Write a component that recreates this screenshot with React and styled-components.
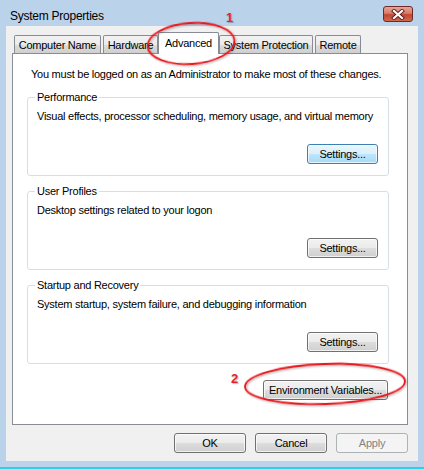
import React from "react";
import styled, { createGlobalStyle, css } from "styled-components";

const GlobalStyle = createGlobalStyle`
  html, body {
    margin: 0;
    padding: 0;
  }
  body {
    background: #bad2ea;
    font-family: "Liberation Sans", Arial, sans-serif;
    font-size: 11px;
    letter-spacing: -0.25px;
    color: #000;
  }
`;

const Window = styled.div`
  position: relative;
  width: 424px;
  height: 469px;
  box-sizing: border-box;
  background: #bad2ea;
  border-bottom: 2px solid #2fd0e6;
  display: flex;
  flex-direction: column;
  overflow: hidden;
`;

const TitleBar = styled.div`
  height: 26px;
  display: flex;
  align-items: flex-start;
  justify-content: space-between;
  padding: 6px 11px 0 10px;
  box-sizing: border-box;
`;

const Title = styled.span`
  font-size: 12px;
  line-height: 16px;
  margin-top: 2px;
  color: #000;
`;

const CloseButton = styled.div`
  width: 30px;
  height: 16px;
  box-sizing: border-box;
  border: 1px solid #6e2a26;
  border-radius: 3px;
  background: linear-gradient(#e6a597 0%, #d87a6a 45%, #c24633 55%, #cf6a4f 100%);
  display: flex;
  align-items: center;
  justify-content: center;
`;

const Client = styled.div`
  height: 435px;
  margin: 0 6px;
  padding: 6px 10px 0 6px;
  box-sizing: border-box;
  background: #f0f0f0;
  display: flex;
  flex-direction: column;
`;

const TabStrip = styled.div`
  height: 21px;
  padding-left: 2px;
  display: flex;
  align-items: flex-end;
  gap: 2px;
`;

const Tab = styled.div`
  width: ${(p) => p.$w}px;
  height: 18px;
  box-sizing: border-box;
  border: 1px solid #898c95;
  border-bottom: none;
  border-radius: 2px 2px 0 0;
  background: linear-gradient(#f2f2f2 0%, #ebebeb 50%, #dddddd 51%, #cfcfcf 100%);
  display: flex;
  align-items: center;
  justify-content: center;
  white-space: nowrap;
  ${(p) =>
    p.$active &&
    css`
      height: 22px;
      margin: 0 -2px -1px;
      position: relative;
      z-index: 1;
      background: #fff;
      padding-bottom: 2px;
    `}
`;

const Panel = styled.div`
  height: 372px;
  box-sizing: border-box;
  background: #fff;
  border: 1px solid #898c95;
  padding: 13px 18px 0 14px;
  display: flex;
  flex-direction: column;
`;

const Notice = styled.div`
  line-height: 15px;
  margin-left: 4px;
  margin-bottom: 8px;
  white-space: nowrap;
`;

const Group = styled.fieldset`
  margin: 0 0 8px;
  padding: 0 10px 11px 9px;
  border: 1px solid #d5dfe5;
  border-radius: 3px;
  display: flex;
  flex-direction: column;
  min-width: 0;
`;

const Legend = styled.legend`
  padding: 0 2px;
  margin-left: -2px;
  line-height: 14px;
`;

const Desc = styled.div`
  line-height: 15px;
  margin-top: 5px;
  white-space: nowrap;
`;

const ButtonRow = styled.div`
  display: flex;
  justify-content: flex-end;
  gap: ${(p) => p.$gap || 0}px;
  margin-top: ${(p) => p.$top || 0}px;
  margin-right: ${(p) => p.$right || 0}px;
`;

const Button = styled.div`
  width: ${(p) => p.$w}px;
  height: 20px;
  box-sizing: border-box;
  border: 1px solid #707070;
  border-radius: 3px;
  background: linear-gradient(#f2f2f2 0%, #ebebeb 50%, #dddddd 51%, #cfcfcf 100%);
  box-shadow: inset 0 0 0 1px rgba(255, 255, 255, 0.7);
  display: flex;
  align-items: center;
  justify-content: center;
  white-space: nowrap;
  ${(p) =>
    p.$focused &&
    css`
      border-color: #3c7fb1;
      background: linear-gradient(#eaf6fd 0%, #d9f0fc 50%, #bee6fd 51%, #a7d9f5 100%);
    `}
  ${(p) =>
    p.$disabled &&
    css`
      border-color: #adb2b5;
      background: #f4f4f4;
      color: #838383;
      box-shadow: none;
    `}
`;

const Annotation = styled.svg`
  position: absolute;
  left: 0;
  top: 0;
  pointer-events: none;
  z-index: 5;
  overflow: visible;
`;

const Marker = styled.span`
  position: absolute;
  left: ${(p) => p.$x}px;
  top: ${(p) => p.$y}px;
  font-family: "Liberation Sans", Arial, sans-serif;
  font-weight: bold;
  font-size: 13px;
  letter-spacing: 0;
  color: #e2262b;
  text-shadow: 1px 1px 1px rgba(0, 0, 0, 0.25);
  z-index: 6;
`;

const tabs = [
  { label: "Computer Name", w: 87 },
  { label: "Hardware", w: 55 },
  { label: "Advanced", w: 61, active: true },
  { label: "System Protection", w: 94 },
  { label: "Remote", w: 46 },
];

const groups = [
  {
    title: "Performance",
    desc: "Visual effects, processor scheduling, memory usage, and virtual memory",
    focused: true,
  },
  { title: "User Profiles", desc: "Desktop settings related to your logon" },
  {
    title: "Startup and Recovery",
    desc: "System startup, system failure, and debugging information",
  },
];

export default function App() {
  return (
    <>
      <GlobalStyle />
      <Window>
        <TitleBar>
          <Title>System Properties</Title>
          <CloseButton>
            <svg width="14" height="11" viewBox="0 0 14 11">
              <path
                d="M3 2 L11 9 M11 2 L3 9"
                stroke="#5a1f1a"
                strokeWidth="4"
                strokeLinecap="square"
              />
              <path
                d="M3 2 L11 9 M11 2 L3 9"
                stroke="#fff"
                strokeWidth="2.2"
                strokeLinecap="square"
              />
            </svg>
          </CloseButton>
        </TitleBar>
        <Client>
          <TabStrip>
            {tabs.map((t) => (
              <Tab key={t.label} $w={t.w} $active={t.active}>
                {t.label}
              </Tab>
            ))}
          </TabStrip>
          <Panel>
            <Notice>
              You must be logged on as an Administrator to make most of these changes.
            </Notice>
            {groups.map((g) => (
              <Group key={g.title}>
                <Legend>{g.title}</Legend>
                <Desc>{g.desc}</Desc>
                <ButtonRow $top={20}>
                  <Button $w={71} $focused={g.focused}>
                    Settings...
                  </Button>
                </ButtonRow>
              </Group>
            ))}
            <ButtonRow $top={8} $right={1}>
              <Button $w={125}>Environment Variables...</Button>
            </ButtonRow>
          </Panel>
          <ButtonRow $top={8} $gap={9}>
            <Button $w={72}>OK</Button>
            <Button $w={72}>Cancel</Button>
            <Button $w={72} $disabled>
              Apply
            </Button>
          </ButtonRow>
        </Client>

        <Annotation width="424" height="469">
          <defs>
            <filter id="soft" x="-10%" y="-10%" width="120%" height="120%">
              <feGaussianBlur in="SourceAlpha" stdDeviation="1" />
              <feOffset dx="1" dy="1" result="b" />
              <feComponentTransfer>
                <feFuncA type="linear" slope="0.35" />
              </feComponentTransfer>
              <feMerge>
                <feMergeNode />
                <feMergeNode in="SourceGraphic" />
              </feMerge>
            </filter>
          </defs>
          <ellipse
            cx="191"
            cy="43.5"
            rx="43.5"
            ry="20.5"
            transform="rotate(-4 191 43.5)"
            fill="none"
            stroke="#e8141b"
            strokeWidth="1.8"
            filter="url(#soft)"
          />
          <ellipse
            cx="325"
            cy="384"
            rx="80"
            ry="20"
            transform="rotate(-2 325 384)"
            fill="none"
            stroke="#e8141b"
            strokeWidth="1.8"
            filter="url(#soft)"
          />
        </Annotation>
        <Marker $x={226} $y={10}>1</Marker>
        <Marker $x={231} $y={371}>2</Marker>
      </Window>
    </>
  );
}
